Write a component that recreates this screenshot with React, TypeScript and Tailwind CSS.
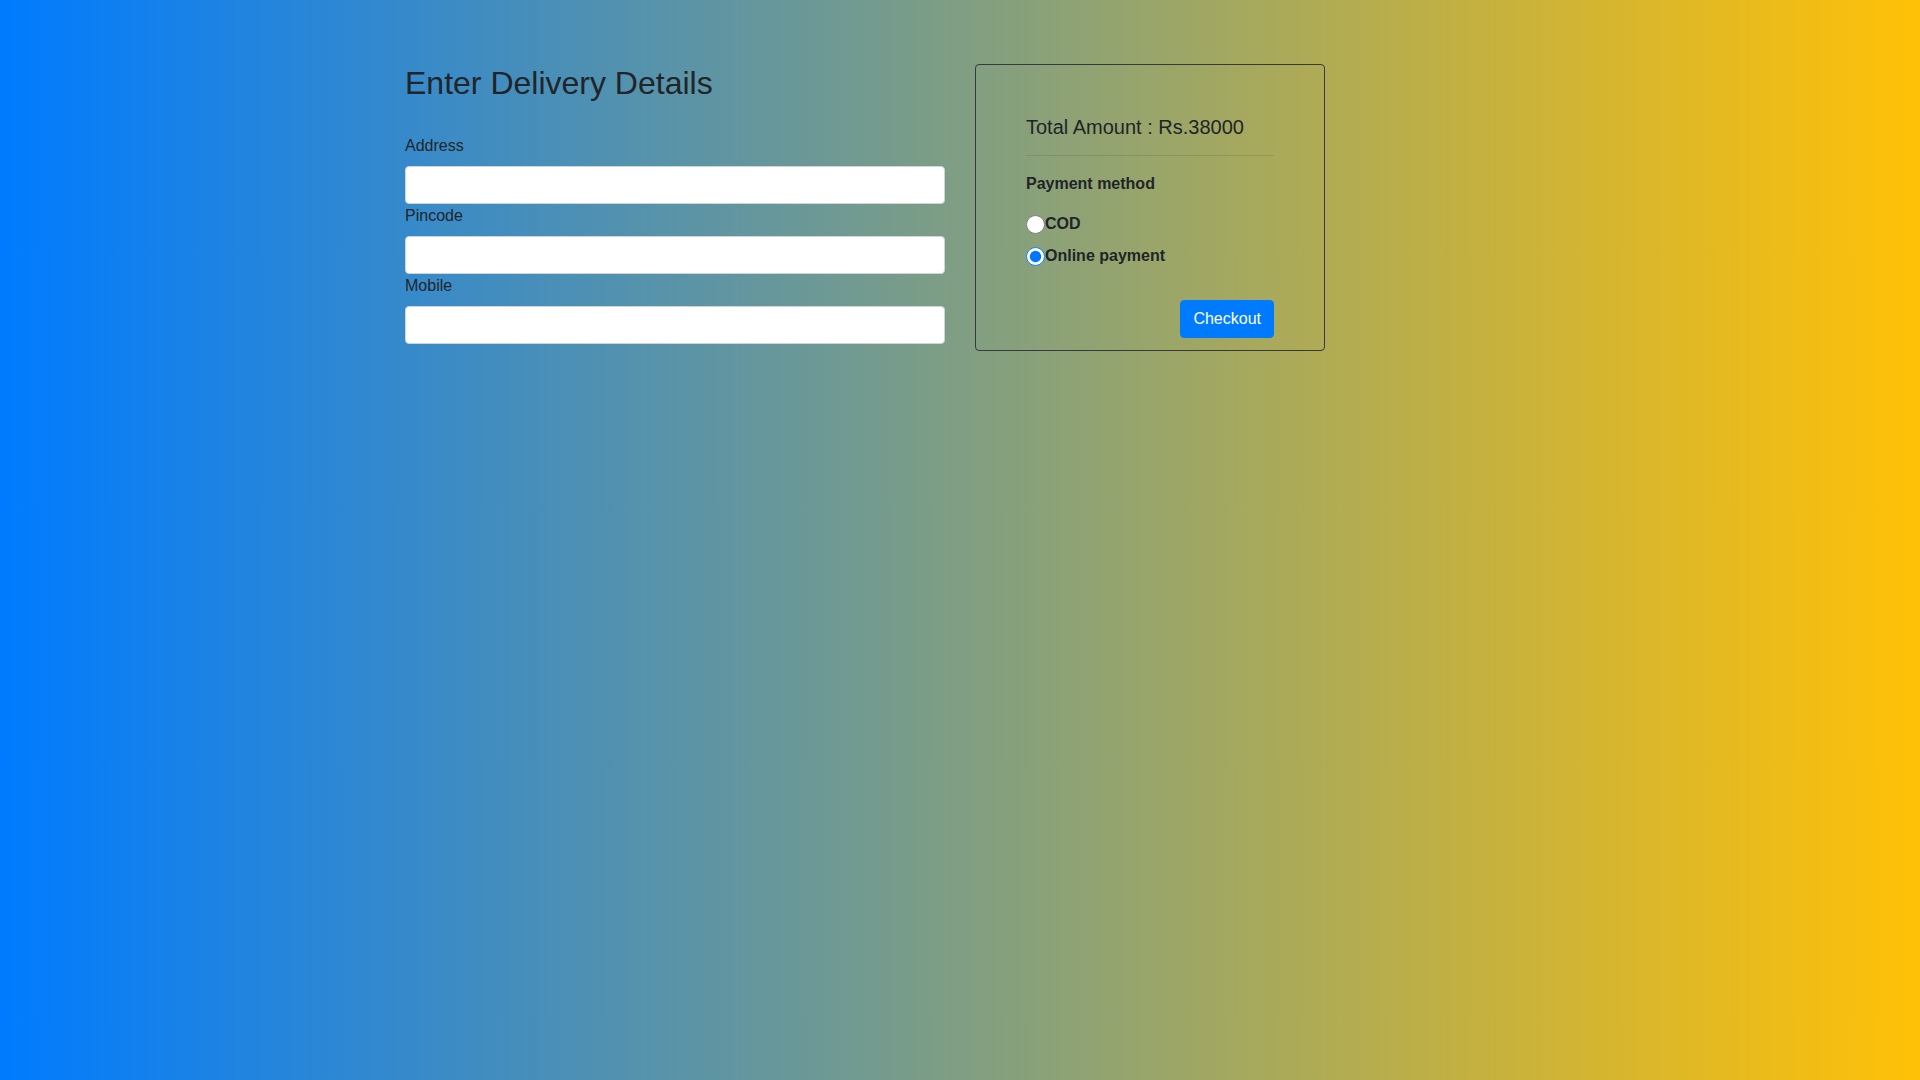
import React from "react";

const fields = ["Address", "Pincode", "Mobile"];

const App = () => {
  return (
    <div className="min-h-screen w-full bg-[linear-gradient(to_right,#007bff,#ffc107)] font-['Liberation_Sans',Arial,sans-serif] text-[#212529]">
      <div className="mx-auto w-[1140px] px-[15px] pt-16">
        <div className="flex gap-[30px]">
          <div className="w-[540px]">
            <h2 className="mb-8 text-[32px] leading-[1.2] font-normal">
              Enter Delivery Details
            </h2>
            <form>
              {fields.map((f) => (
                <div key={f}>
                  <label className="mb-2 block text-base leading-6">{f}</label>
                  <input
                    type="text"
                    className="block h-[38px] w-full rounded border border-[#ced4da] bg-white px-3 text-base"
                  />
                </div>
              ))}
            </form>
          </div>
          <div className="w-[350px] rounded border border-[#343a40] px-[50px] pt-[50px] pb-3">
            <h5 className="text-[20px] leading-[1.2] font-normal">
              Total Amount : Rs.38000
            </h5>
            <hr className="mt-4 mb-4 border-t border-black/10" />
            <div className="text-base leading-6 font-bold">Payment method</div>
            <div className="mt-4 flex flex-col gap-2">
              <label className="flex h-6 items-center text-base font-bold">
                <input type="radio" name="pay" className="m-0 h-[19px] w-[19px]" />
                COD
              </label>
              <label className="flex h-6 items-center text-base font-bold">
                <input
                  type="radio"
                  name="pay"
                  defaultChecked
                  className="m-0 h-[19px] w-[19px] accent-[#0075ff]"
                />
                Online payment
              </label>
            </div>
            <div className="mt-8 flex justify-end">
              <button className="h-[38px] rounded border border-[#007bff] bg-[#007bff] px-3 text-base text-white">
                Checkout
              </button>
            </div>
          </div>
        </div>
      </div>
    </div>
  );
};

export default App;
